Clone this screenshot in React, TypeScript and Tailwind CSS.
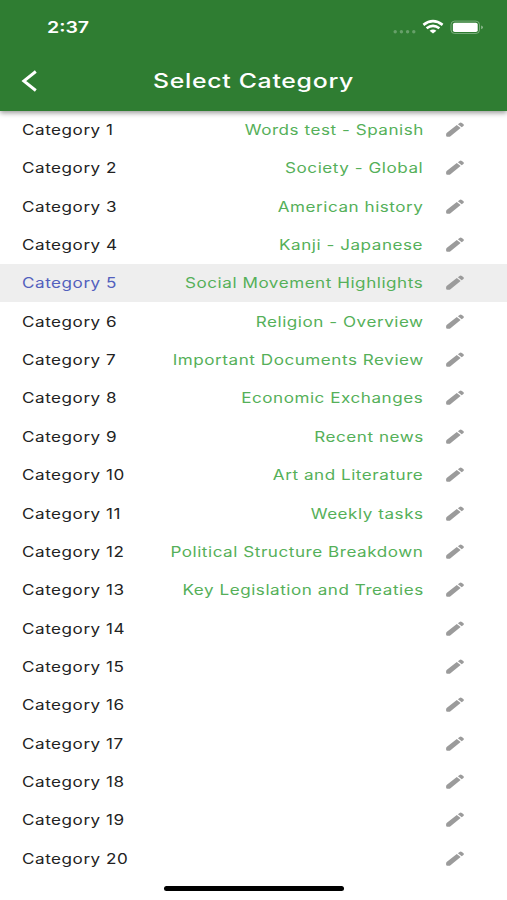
import React from 'react';
import clsx from 'clsx';

interface Category {
  id: number;
  title?: string;
}

const titles = [
  "Words test - Spanish",
  "Society - Global",
  "American history",
  "Kanji - Japanese",
  "Social Movement Highlights",
  "Religion - Overview",
  "Important Documents Review",
  "Economic Exchanges",
  "Recent news",
  "Art and Literature",
  "Weekly tasks",
  "Political Structure Breakdown",
  "Key Legislation and Treaties",
];

const categories: Category[] = Array.from({ length: 20 }, (_, index) => ({
  id: index + 1,
  title: titles[index],
}));

const SELECTED_ID = 5;

const PencilIcon = () => (
  <svg width="18" height="16" viewBox="0 0 18 16" fill="#9b9b9b" className="block">
    <path d="M.9 10.8 10.8 3.1 14.6 6.1 4.8 13.9Q3.9 14.8 2.7 14.8H1.4Q.1 14.8.1 13.6V12.6Q.1 11.5.9 10.8Z" />
    <path d="M11.9 2.3 13.6 1Q14.7.1 15.9 1L17.5 2.3Q18.3 3.1 17.4 3.9L15.7 5.3Z" />
  </svg>
);

const StatusIcons = () => (
  <svg width="92" height="16" viewBox="0 0 92 16" className="block">
    <g fill="#fff" opacity="0.27">
      <circle cx="3.2" cy="12.8" r="1.7" />
      <circle cx="9.4" cy="12.8" r="1.7" />
      <circle cx="15.6" cy="12.8" r="1.7" />
      <circle cx="21.8" cy="12.8" r="1.7" />
    </g>
    <g fill="none" stroke="#fff" strokeWidth="2.6">
      <path d="M31.4 5.9Q41 -1.5 50.6 5.9" />
      <path d="M34.6 9.3Q41 4.3 47.4 9.3" />
    </g>
    <path d="M37.6 11.7Q41 9.3 44.4 11.7L41 14.5Z" fill="#fff" />
    <rect x="59" y="2.1" width="28.5" height="12.4" rx="3.6" fill="none" stroke="#fff" strokeOpacity="0.35" />
    <rect x="60.9" y="3.8" width="24.8" height="9.2" rx="1.8" fill="#fff" />
    <path d="M89.1 6.4Q91 6.9 91 8.3T89.1 10.2Z" fill="#fff" opacity="0.45" />
  </svg>
);

const Header = () => (
  <header className="relative z-10 h-[110.5px] bg-[#2f7d32] text-white shadow-[0_2px_5px_rgba(0,0,0,0.4)]">
    <div className="flex h-[54px] items-center justify-between pl-[47px] pr-[23px]">
      <span className="origin-left scale-x-[1.22] text-[16px] font-semibold leading-none">2:37</span>
      <StatusIcons />
    </div>
    <div className="grid h-[54px] grid-cols-[60px_1fr_60px] items-center">
      <button type="button" aria-label="Back" className="pl-[21px]">
        <svg width="17" height="22" viewBox="0 0 17 22" fill="none" stroke="#fff" strokeWidth="2.9" className="block">
          <path d="M14.8 1.5 2.8 11 14.8 20.5" />
        </svg>
      </button>
      <h1 className="scale-x-[1.24] whitespace-nowrap text-center text-[20px] font-medium leading-none tracking-[0.58px]">
        Select Category
      </h1>
    </div>
  </header>
);

const CategoryRow: React.FC<{ category: Category; selected: boolean }> = ({ category, selected }) => (
  <li
    className={clsx(
      "flex h-[38.37px] items-center pl-[22px] pr-[43px] pt-[0.6px] text-[14px] leading-none tracking-[0.44px]",
      selected && "bg-[#eeeeee]"
    )}
  >
    <span
      className={clsx(
        "origin-left scale-x-[1.22] whitespace-nowrap",
        selected ? "text-[#5260bd]" : "text-[#222222]"
      )}
    >
      Category {category.id}
    </span>
    <span className="ml-auto origin-right scale-x-[1.22] whitespace-nowrap text-[#55b059]">
      {category.title}
    </span>
    <button type="button" aria-label="Edit" className="ml-[22.5px]">
      <PencilIcon />
    </button>
  </li>
);

const App = () => (
  <div className="flex h-[900px] w-[507px] flex-col overflow-hidden bg-white font-['Inter',sans-serif]">
    <Header />
    <ul>
      {categories.map((category) => (
        <CategoryRow key={category.id} category={category} selected={category.id === SELECTED_ID} />
      ))}
    </ul>
    <div className="ml-[164px] mt-[8px] h-[5.5px] w-[180px] shrink-0 rounded-full bg-black" />
  </div>
);

export default App;
